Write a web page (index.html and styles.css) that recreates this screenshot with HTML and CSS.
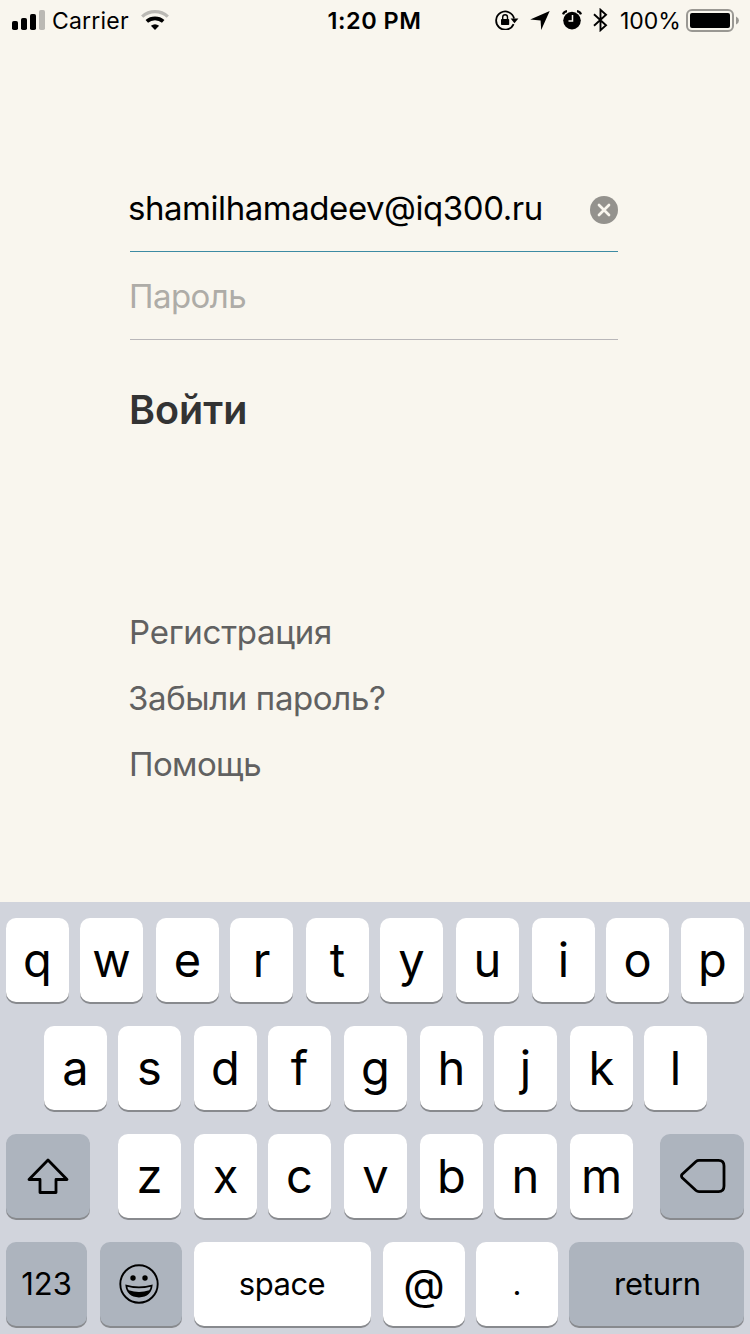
FILE: index.html
```
<!DOCTYPE html>
<html lang="ru">
<head>
<meta charset="utf-8">
<title>Войти</title>
<link rel="stylesheet" href="styles.css">
</head>
<body>
<div class="screen">
  <header class="status">
    <div class="status-left">
      <svg class="signal" width="34" height="20" viewBox="0 0 34 20">
        <rect x="0" y="11" width="6" height="9" rx="1.8"/>
        <rect x="9" y="8" width="6" height="12" rx="1.8"/>
        <rect x="18" y="4" width="6" height="16" rx="1.8"/>
        <rect x="27" y="0" width="6" height="20" rx="1.8" fill="#bbb9b4"/>
      </svg>
      <span class="carrier">Carrier</span>
      <svg class="wifi" width="28" height="20" viewBox="0 0 28 20" fill="none">
        <path d="M1.2 6.6C8.4 0 19.6 0 26.8 6.6" stroke="#bbb9b4" stroke-width="3.3"/>
        <path d="M5.8 11.4C10.5 7.4 17.5 7.4 22.2 11.4" stroke="#000" stroke-width="3.8"/>
        <path d="M9.9 15.8Q14 12.8 18.1 15.8L14 20Z" fill="#000"/>
      </svg>
    </div>
    <span class="time">1:20 PM</span>
    <div class="status-right">
      <svg class="lock" width="24" height="20" viewBox="0 0 24 20" fill="none">
        <path d="M18.6 14.2A9.1 9.1 0 1 1 19.1 8.5" stroke="#000" stroke-width="1.8"/>
        <path d="M15.6 8.6H23.4L19.5 13.2Z" fill="#000"/>
        <rect x="6" y="9" width="8.2" height="6" rx=".8" fill="#000"/>
        <path d="M7.7 9V7.2a2.4 2.4 0 0 1 4.8 0V9" stroke="#000" stroke-width="1.4"/>
      </svg>
      <svg class="arrow" width="20" height="20" viewBox="0 0 20 20"><path d="M19.7 1L11.200 20L10.600 10.400L.2 9.500Z"/></svg>
      <svg class="alarm" width="20" height="20" viewBox="0 0 20 20" fill="none">
        <circle cx="10" cy="10.600" r="8.800" fill="#000"/>
        <path d="M1 4.400Q2 1.500 5 1.200M19 4.400Q18 1.500 15 1.200" stroke="#000" stroke-width="2.200"/>
        <path d="M10.500 5V11H6.500" stroke="#f9f6ee" stroke-width="1.500"/>
      </svg>
      <svg class="bluetooth" width="15" height="24" viewBox="0 0 15 24" fill="none"><path d="M1 6.300L13 17.300L7.500 22.200V1.800L13 6.700L1 17.700" stroke="#000" stroke-width="1.900"/></svg>
      <span class="percent">100%</span>
      <svg class="battery" width="53" height="24" viewBox="0 0 53 24">
        <rect x="1" y="1" width="46" height="21" rx="5" fill="none" stroke="#9a9893" stroke-width="2"/>
        <rect x="4" y="4" width="40" height="15" rx="2"/>
        <path d="M50 7.500Q53 9 53 11.500T50 15.500Z" fill="#9a9893"/>
      </svg>
    </div>
  </header>

  <main class="login">
    <div class="field field-active">
      <span class="email">shamilhamadeev@iq300.ru</span>
      <svg class="clear" width="28" height="28" viewBox="0 0 28 28"><circle cx="14" cy="14" r="14" fill="#94928d"/><path d="M9 9L19 19M19 9L9 19" stroke="#f9f6ee" stroke-width="2.700" stroke-linecap="round"/></svg>
    </div>
    <div class="field"><span class="placeholder">Пароль</span></div>
    <div class="submit"><span>Войти</span></div>
    <nav class="links">
      <a class="link-register">Регистрация</a>
      <a class="link-forgot">Забыли пароль?</a>
      <a class="link-help">Помощь</a>
    </nav>
  </main>

  <section class="keyboard">
    <div class="row row-1">
      <span class="key">q</span><span class="key">w</span><span class="key">e</span><span class="key">r</span><span class="key">t</span><span class="key">y</span><span class="key">u</span><span class="key">i</span><span class="key">o</span><span class="key">p</span>
    </div>
    <div class="row row-2">
      <span class="key">a</span><span class="key">s</span><span class="key">d</span><span class="key">f</span><span class="key">g</span><span class="key">h</span><span class="key">j</span><span class="key">k</span><span class="key">l</span>
    </div>
    <div class="row row-3">
      <span class="key dark shift"><svg width="42" height="36" viewBox="0 0 42 36" fill="none" stroke="#000" stroke-width="2.800" stroke-linejoin="round"><path d="M21 2L40 21.500H29V34.500H13V21.500H2Z"/></svg></span>
      <span class="key">z</span><span class="key">x</span><span class="key">c</span><span class="key">v</span><span class="key">b</span><span class="key">n</span><span class="key">m</span>
      <span class="key dark backspace"><svg width="46" height="34" viewBox="0 0 46 34" fill="none" stroke="#000" stroke-width="2.800" stroke-linejoin="round"><path d="M19 1.400H38.500Q44 1.400 44 7V27Q44 32.600 38.500 32.600H19Q17.300 32.600 16 31.500L2.200 18.800Q.8 17 2.200 15.200L16 2.500Q17.300 1.400 19 1.400Z"/></svg></span>
    </div>
    <div class="row row-4">
      <span class="key dark label digits">123</span>
      <span class="key dark emoji"><svg width="40" height="40" viewBox="0 0 40 40">
        <circle cx="20" cy="20" r="18.700" fill="none" stroke="#000" stroke-width="1.900"/>
        <circle cx="14" cy="14" r="2.700"/><circle cx="26" cy="14" r="2.700"/>
        <path d="M6.300 20.600Q20 24.600 33.700 20.600Q32.500 33.400 20 33.400Q7.500 33.400 6.300 20.600Z"/>
        <path d="M8.400 22.700Q20 25.800 31.600 22.700Q31.400 24.800 30.200 26.300Q20 29.500 9.800 26.300Q8.600 24.800 8.400 22.700Z" fill="#adb4be"/>
      </svg></span>
      <span class="key label space">space</span>
      <span class="key at">@</span>
      <span class="key label dot">.</span>
      <span class="key dark label return">return</span>
    </div>
  </section>
</div>
</body>
</html>
```
FILE: styles.css
```
* { box-sizing: border-box; }
body { margin: 0; }
.screen {
  width: 750px; height: 1334px; overflow: hidden;
  display: flex; flex-direction: column;
  background: #f9f6ee; color: #000;
  font-family: Inter, "Liberation Sans", sans-serif;
  white-space: nowrap;
}
svg { display: block; flex: none; }

.status {
  display: grid; grid-template-columns: 1fr auto 1fr; align-items: center;
  height: 40px; padding: 0 11px 0 12px;
  font-size: 23px; line-height: 38px;
}
.status-left { display: flex; align-items: center; }
.carrier { margin-left: 6px; padding-top: 2px; width: 76px; letter-spacing: 0.2px; }
.wifi { margin-left: 13px; }
.time { font-weight: 600; font-size: 23.5px; letter-spacing: 0.5px; padding: 2px 2px 0 0; }
.status-right { display: flex; align-items: center; justify-content: flex-end; }
.arrow { margin-left: 11px; }
.alarm { margin-left: 12px; }
.bluetooth { margin-left: 11px; }
.percent { margin-left: 12px; padding-top: 2px; width: 60px; }
.battery { margin-left: 6px; margin-top: 2px; }

.login { flex: none; height: 862px; padding: 124px 132px 0 130px; }
.field {
  display: flex; align-items: center; justify-content: space-between;
  height: 88px; border-bottom: 1px solid #b9b7b9;
  font-size: 33px;
}
.field-active { border-color: #3d8ba3; }
.email { letter-spacing: -0.45px; margin-left: -2px; }
.clear { margin-top: 4px; }
.placeholder { color: #aeaca7; margin-left: -1px; letter-spacing: -0.55px; }
.submit { margin: 39px 0 0 -1px; height: 62px; line-height: 62px; font-size: 39.5px; font-weight: 600; color: #333; }
.links { display: flex; flex-direction: column; margin-top: 158px; font-size: 33px; line-height: 66px; color: #616161; }
.links a { margin-left: -1px; }
.link-register { letter-spacing: -0.25px; }
.links .link-forgot { letter-spacing: -0.38px; margin-left: -2px; }
.link-help { letter-spacing: -0.6px; }

.keyboard {
  flex: none; height: 432px; padding: 16px 6px 0;
  display: flex; flex-direction: column; gap: 24px;
  background: #d1d4dc;
}
.row { display: grid; justify-content: start; grid-auto-rows: 84px; }
.row-1 { grid-template-columns: 74px 76px 74px 76px 74px 76px 76px 74px 75px 63px; }
.row-2 { grid-template-columns: 74px 76px 74px 76px 76px 74px 76px 74px 63px; padding-left: 38px; }
.row-3 { grid-template-columns: 112px 76px 74px 76px 76px 74px 76px 90px 84px; }
.row-4 { grid-template-columns: 94px 94px 189px 93px 93px 175px; }
.key {
  width: 63px;
  display: flex; align-items: center; justify-content: center;
  border-radius: 10px; background: #fff;
  box-shadow: 0 2px 0 #888a8e;
  font-size: 47px; line-height: 84px;
}
.dark { background: #adb4be; }
.shift { width: 84px; }
.backspace { width: 84px; padding-left: 2px; }
.label { font-size: 31px; }
.digits { width: 81px; }
.emoji { width: 82px; padding-right: 4px; }
.space { width: 177px; letter-spacing: -0.5px; padding-right: 1px; }
.at { width: 82px; font-size: 43px; }
.dot { width: 82px; }
.return { width: 175px; letter-spacing: -0.2px; padding-left: 2px; }
```
